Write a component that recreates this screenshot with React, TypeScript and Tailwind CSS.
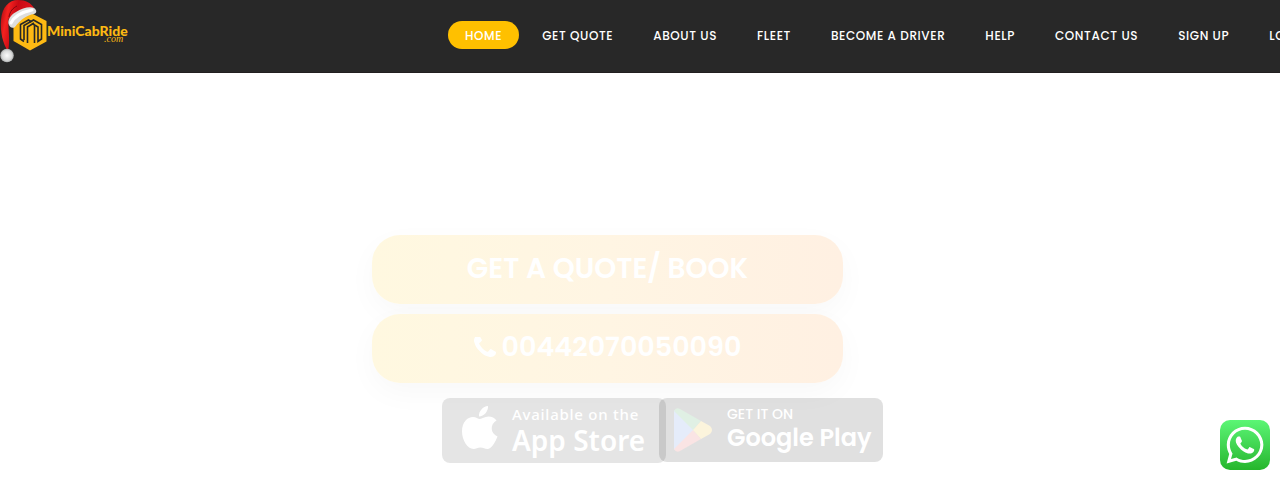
import { FaWhatsapp } from 'react-icons/fa';

const NAV_ITEMS = [
  { label: 'Home', active: true },
  { label: 'Get Quote' },
  { label: 'About Us' },
  { label: 'Fleet' },
  { label: 'Become a Driver' },
  { label: 'Help' },
  { label: 'Contact Us' },
  { label: 'Sign Up' },
  { label: 'Login' },
];

function Logo() {
  return (
    <svg viewBox="0 0 128 64" className="block h-16 w-32" role="img" aria-label="MiniCabRide.com">
      <defs>
        <linearGradient id="hat" x1="0" y1="0" x2="1" y2="0.3">
          <stop offset="0" stopColor="#9d0610" />
          <stop offset="0.25" stopColor="#f5221f" />
          <stop offset="0.5" stopColor="#c90a14" />
          <stop offset="1" stopColor="#e3151c" />
        </linearGradient>
        <radialGradient id="fur">
          <stop offset="0" stopColor="#fbfbfb" />
          <stop offset="0.7" stopColor="#d9dada" />
          <stop offset="1" stopColor="#a9abab" />
        </radialGradient>
      </defs>
      {/* hexagon mark */}
      <path d="M30 12.5 46.5 21v20.5L30 50.5 13.5 41V21z" fill="#fdb913" />
      <g fill="none" stroke="#262626" strokeWidth="1.6">
        <path d="M24 41.500 20.500 39V24.500l8-4.500 2.500 1.500-7 4V40" />
        <path d="M27.500 43V27l6.500-4" />
        <path d="m30 22 3.500-2 8 4.500V39L38 41.500V27l-6-3.500" />
        <path d="M34.500 25.500V43" />
      </g>
      {/* santa hat */}
      <path d="M8 51C3 44 0 32 1 20 2 7 9 0 18 0c8 0 13 3 16 8L13 24c-3-2-4-5-4-7-2 8 2 23-1 34z" fill="url(#hat)" />
      <path d="M9 17c1-6 4-9 8-11" fill="none" stroke="#80060d" strokeWidth="1" />
      <path
        d="M9 25c-2-4 1-10 7-13 6-4 14-6 18-4 3 2 3 5 0 6-7 1-14 6-19 13-3 2-5 0-6-2z"
        fill="#dededd"
      />
      <path d="M11 23c3-6 11-11 21-13" fill="none" stroke="#fff" strokeWidth="3" strokeLinecap="round" />
      <circle cx="7" cy="55.500" r="6.800" fill="url(#fur)" />
      <text x="47" y="36" fontSize="14" fontWeight="900" fill="#fdb913" fontFamily="Lato, sans-serif">
        MiniCabRide
      </text>
      <text x="104" y="42" fontSize="10" fontStyle="italic" fill="#fdb913" fontFamily="'Liberation Serif', serif">
        .com
      </text>
    </svg>
  );
}

function PhoneIcon() {
  return (
    <svg viewBox="192 256 1408 1408" className="size-[22px]" fill="currentColor" aria-hidden="true">
      <path d="M1600 1240q0 27-10 70.500t-21 68.500q-21 50-122 106-94 51-186 51-27 0-53-3.500t-57.500-12.500-47-14.500-55.500-20.500-49-18q-98-35-175-83-127-79-264-216t-216-264q-48-77-83-175-3-9-18-49t-20.500-55.500-14.500-47-12.500-57.500-3.500-53q0-92 51-186 56-101 106-122 25-11 68.500-21t70.500-10q14 0 21 3 18 6 53 76 11 19 30 54t35 63.500 31 53.500q3 4 17.500 25t21.500 35.500 7 28.500q0 20-28.500 50t-62 55-62 53-28.500 46q0 9 5 22.500t8.500 20.500 14 24 11.500 19q76 137 174 235t235 174q2 1 19 11.500t24 14 20.500 8.500 22.500 5q18 0 46-28.500t53-62 55-62 50-28.500q14 0 28.500 7t35.500 21.500 25 17.500q25 15 53.500 31t63.500 35 54 30q70 35 76 53 3 7 3 21z" />
    </svg>
  );
}

function AppleIcon() {
  return (
    <svg viewBox="0 0 36 44" className="h-11 w-9 shrink-0" fill="currentColor" aria-hidden="true">
      <path d="M26 0c.5 5-4 10.500-9 10.500C16.500 5 21 .5 26 0zM18 13c2 0 4.500-2.500 8.500-2.500 3.500 0 6 1.500 8 4-7 4-6 13 1 16-2 5.500-6 12.500-10 12.500-3 0-4-1.500-7-1.500s-4.500 1.500-7 1.500C5.500 43 0 34 0 25.500 0 16 5.500 11 11 11c3 0 5 2 7 2z" />
    </svg>
  );
}

function PlayIcon() {
  return (
    <svg viewBox="0 0 40 44" className="mt-0.5 h-11 w-10 shrink-0" aria-hidden="true">
      <path d="M1 2v40l20-20z" fill="#e5ecfa" />
      <path d="M1 3Q3-1 7 1l21 12-8 9z" fill="#e0f0e4" />
      <path d="M1 41q2 4 6 2l21-12-8-9z" fill="#fae4e4" />
      <path d="m28 13 9 5q4 4 0 8l-9 5-8-9z" fill="#fcf4dc" />
    </svg>
  );
}

export default function App() {
  return (
    <div className="min-h-screen overflow-hidden bg-white font-['Poppins',sans-serif]">
      {/* Header */}
      <header className="flex h-[73px] items-start overflow-hidden border-b border-[#221f20] bg-[#282828]">
        <a href="#" className="w-[35%] shrink-0">
          <Logo />
        </a>
        <nav className="flex shrink-0 gap-1.5 pt-[21px]">
          {NAV_ITEMS.map((item) => (
            <a
              key={item.label}
              href="#"
              className={`rounded-full px-[17px] pt-0.5 text-xs leading-[26px] font-medium tracking-wider whitespace-nowrap text-white uppercase ${
                item.active ? 'bg-[#ffc000]' : ''
              }`}
            >
              {item.label}
            </a>
          ))}
        </nav>
      </header>

      {/* Call to action */}
      <main className="flex flex-col items-center pt-[162px]">
        <div className="flex w-full flex-col items-center gap-2.5 pr-[65px] font-semibold text-white">
          <button className="h-[69px] w-[471px] rounded-[28px] bg-linear-to-r from-[#fff8e0] via-[#fff5e3] to-[#fff0e2] pb-0.5 text-[28px] shadow-[0_10px_30px_rgba(0,0,0,0.03)]">
            GET A QUOTE/ BOOK
          </button>
          <a
            href="tel:00442070050090"
            className="flex h-[69px] w-[471px] items-center justify-center gap-1.5 rounded-[28px] bg-linear-to-r from-[#fff8e0] via-[#fff5e3] to-[#fff0e2] pb-0.5 text-[27px] shadow-[0_10px_30px_rgba(0,0,0,0.03)]"
          >
            <PhoneIcon />
            00442070050090
          </a>
        </div>

        {/* Store badges */}
        <div className="flex w-full justify-center pt-[15px] pl-[45px] text-white">
          <a href="#" className="flex h-[65px] w-56 items-start gap-3.5 rounded-lg bg-black/10 pt-2 pl-5 font-['Noto_Sans',sans-serif]">
            <AppleIcon />
            <span className="flex flex-col">
              <span className="text-[15px] leading-4 font-medium tracking-wider">Available on the</span>
              <span className="text-[28px] leading-9 font-semibold">App Store</span>
            </span>
          </a>
          <a href="#" className="-ml-[7px] flex h-16 w-56 items-start gap-3.5 rounded-lg bg-black/12 pt-2 pl-3.5">
            <PlayIcon />
            <span className="flex flex-col">
              <span className="text-sm leading-4 font-medium">GET IT ON</span>
              <span className="text-2xl leading-8 font-semibold">Google Play</span>
            </span>
          </a>
        </div>
      </main>

      <a
        href="#"
        aria-label="WhatsApp"
        className="fixed right-2.5 bottom-2.5 flex size-[50px] items-center justify-center rounded-[10px] bg-linear-to-b from-[#5bf675] to-[#25b62b] text-white"
      >
        <FaWhatsapp className="size-[42px]" />
      </a>
    </div>
  );
}
